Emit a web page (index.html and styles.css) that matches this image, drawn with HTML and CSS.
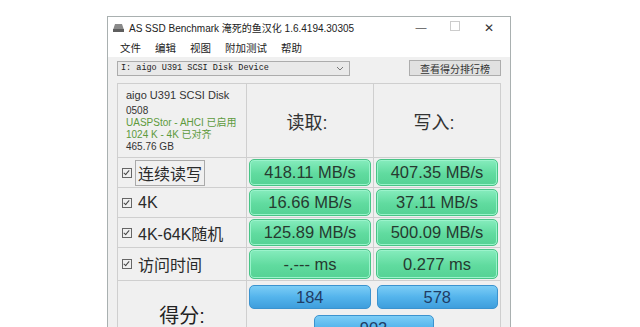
FILE: index.html
```html
<!DOCTYPE html>
<html lang="zh-CN">
<head>
  <meta charset="UTF-8" />
  <title>AS SSD Benchmark</title>
  <link rel="stylesheet" href="styles.css">
</head>
<body>
  <div class="window">
    <div class="titlebar">
      <svg class="app-icon" width="11" height="9" viewBox="0 0 11 9">
        <path d="M2 1h7l2 6H0z" fill="#8a8a8a"/>
        <rect x="0" y="6" width="11" height="3" fill="#5e5e5e"/>
      </svg>
      <span class="title">AS SSD Benchmark 淹死的鱼汉化 1.6.4194.30305</span>
      <div class="controls">
        <span class="ctl">&#8212;</span>
        <span class="ctl max"></span>
        <span class="ctl close">&#10005;</span>
      </div>
    </div>

    <div class="menubar">
      <span>文件</span>
      <span>编辑</span>
      <span>视图</span>
      <span>附加测试</span>
      <span>帮助</span>
    </div>

    <div class="toolbar">
      <div class="drive-select">
        <span>I: aigo U391 SCSI Disk Device</span>
        <svg width="8" height="5" viewBox="0 0 8 5"><path d="M1 1l3 3 3-3" fill="none" stroke="#777" stroke-width="1"/></svg>
      </div>
      <button class="rank-btn">查看得分排行榜</button>
    </div>

    <div class="grid">
      <div class="cell info">
        <div class="disk-name">aigo U391 SCSI Disk</div>
        <div>0508</div>
        <div class="ok">UASPStor - AHCI 已启用</div>
        <div class="ok">1024 K - 4K 已对齐</div>
        <div>465.76 GB</div>
      </div>
      <div class="cell head">读取:</div>
      <div class="cell head">写入:</div>

      <div class="cell label"><span class="check"></span><span class="focus">连续读写</span></div>
      <div class="cell val"><div class="box green">418.11 MB/s</div></div>
      <div class="cell val"><div class="box green">407.35 MB/s</div></div>

      <div class="cell label"><span class="check"></span><span>4K</span></div>
      <div class="cell val"><div class="box green">16.66 MB/s</div></div>
      <div class="cell val"><div class="box green">37.11 MB/s</div></div>

      <div class="cell label"><span class="check"></span><span>4K-64K随机</span></div>
      <div class="cell val"><div class="box green">125.89 MB/s</div></div>
      <div class="cell val"><div class="box green">500.09 MB/s</div></div>

      <div class="cell label"><span class="check"></span><span>访问时间</span></div>
      <div class="cell val"><div class="box green">-.--- ms</div></div>
      <div class="cell val"><div class="box green">0.277 ms</div></div>

      <div class="cell score-label">得分:</div>
      <div class="cell score">
        <div class="score-row">
          <div class="box blue">184</div>
          <div class="box blue">578</div>
        </div>
        <div class="box blue total">902</div>
      </div>
    </div>
  </div>
</body>
</html>
```

FILE: styles.css
```css
body {
  margin: 0;
  height: 327px;
  overflow: hidden;
  background: #fff;
  font-family: "Liberation Sans", "Noto Sans CJK SC", sans-serif;
  color: #222;
}

.window {
  margin: 16px 0 0 107px;
  width: 402px;
  height: 310px;
  border: 1px solid #a9b0b0;
  border-bottom: none;
  background: #f0f0f0;
  overflow: hidden;
}

.titlebar {
  height: 21px;
  display: flex;
  align-items: center;
  padding-left: 5px;
  background: #fff;
  font-size: 10px;
}

.app-icon {
  margin-right: 5px;
}

.controls {
  margin-left: auto;
  display: flex;
}

.ctl {
  width: 34px;
  text-align: center;
  font-size: 11px;
  color: #555;
}

.ctl.max::before {
  content: "";
  display: inline-block;
  width: 8px;
  height: 8px;
  border: 1px solid #ccc;
}

.ctl.close {
  font-size: 12px;
  color: #333;
  margin-right: 4px;
}

.menubar {
  height: 19px;
  display: flex;
  align-items: center;
  padding-left: 5px;
  background: #fff;
  font-size: 10.5px;
}

.menubar span {
  padding: 0 7px;
}

.toolbar {
  display: flex;
  align-items: center;
  height: 22px;
  padding: 0 9px;
}

.drive-select {
  width: 233px;
  height: 15px;
  border: 1px solid #acacac;
  background: #e9e9e9;
  display: flex;
  align-items: center;
  justify-content: space-between;
  padding: 0 5px 0 3px;
  box-sizing: border-box;
  font-family: "Liberation Mono", monospace;
  font-size: 8.5px;
}

.rank-btn {
  margin-left: auto;
  width: 92px;
  height: 16px;
  padding: 0;
  border: 1px solid #adadad;
  background: #e1e1e1;
  font-family: "Noto Sans CJK SC", sans-serif;
  font-size: 10px;
  color: #333;
}

.grid {
  margin: 4px 0 0 9px;
  display: grid;
  grid-template-columns: 128px 126px 126px;
  grid-template-rows: 73px 29px 29px 29px 32px 60px;
  gap: 1px;
  background: #cfcfcf;
  border: 1px solid #cfcfcf;
  width: fit-content;
}

.cell {
  background: #f0f0f0;
}

.info {
  padding: 4px 8px;
  font-size: 10px;
  line-height: 12px;
  color: #333;
  overflow: hidden;
}

.disk-name {
  font-size: 11px;
  line-height: 14px;
  margin-bottom: 3px;
}

.ok {
  color: #5d9a3c;
}

.head {
  display: flex;
  align-items: center;
  justify-content: center;
  font-size: 18px;
  color: #333;
  padding: 0 6px 0 0;
}

.label {
  display: flex;
  align-items: center;
  gap: 6px;
  padding-left: 4px;
  font-size: 16px;
  color: #2a2a2a;
}

.check {
  width: 8px;
  height: 8px;
  border: 1px solid #666;
  position: relative;
}

.check::after {
  content: "";
  position: absolute;
  left: 2px;
  top: 0;
  width: 2px;
  height: 5px;
  border: solid #444;
  border-width: 0 1px 1px 0;
  transform: rotate(40deg);
}

.focus {
  border: 1px solid #aaa;
  padding: 0 2px;
  margin-left: -3px;
}

.val {
  padding: 1px 2px;
}

.box {
  height: 100%;
  box-sizing: border-box;
  border-radius: 5px;
  display: flex;
  align-items: center;
  justify-content: center;
  font-size: 16.5px;
  color: #263a30;
}

.green {
  background: linear-gradient(#86ecbd, #60db9f 55%, #55d294);
  border: 1px solid #48c486;
  box-shadow: inset 0 0 0 1px #9af3cb;
}

.blue {
  background: linear-gradient(#7ccdf6, #54b4ec 50%, #3f9edc);
  border: 1px solid #3b93cf;
  color: #1f3d66;
}

.score-label {
  display: flex;
  align-items: flex-end;
  justify-content: center;
  padding-bottom: 12px;
  font-size: 20px;
}

.score {
  grid-column: 2 / 4;
  display: flex;
  flex-direction: column;
  align-items: center;
  padding: 4px 2px 0;
  gap: 6px;
}

.score-row {
  display: flex;
  gap: 6px;
  width: 100%;
  height: 26px;
}

.score-row .box {
  flex: 1;
}

.total {
  width: 120px;
  height: 26px;
  flex: none;
}
```
